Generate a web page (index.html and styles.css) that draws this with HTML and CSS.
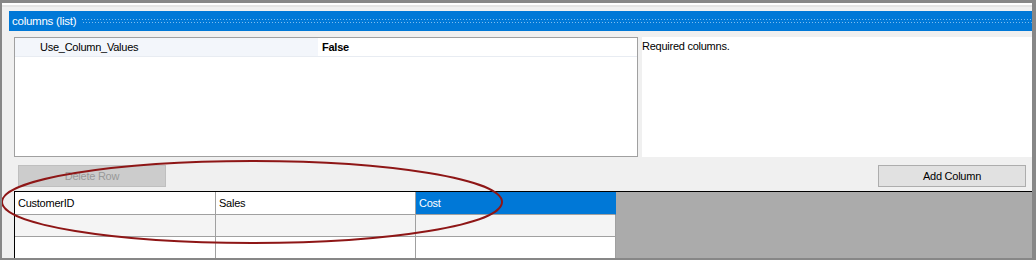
FILE: index.html
```html
<!DOCTYPE html>
<html>
<head>
<meta charset="utf-8">
<link rel="stylesheet" href="styles.css">
</head>
<body>
<div class="frame">
  <div class="topstrip"></div>
  <div class="section-head">
    <span class="title">columns (list)</span>
    <svg class="dots" height="6" preserveAspectRatio="none">
      <defs>
        <pattern id="dp" width="3" height="6" patternUnits="userSpaceOnUse">
          <rect x="0" y="0" width="1" height="1" fill="#7dbdf0"/>
          <rect x="1" y="3" width="1" height="1" fill="#7dbdf0"/>
        </pattern>
      </defs>
      <rect x="0" y="0" width="100%" height="6" fill="url(#dp)"/>
    </svg>
  </div>
  <div class="main">
    <div class="props">
      <div class="prop-row">
        <div class="prop-name">Use_Column_Values</div>
        <div class="prop-value">False</div>
      </div>
    </div>
    <div class="desc">Required columns.</div>
  </div>
  <div class="buttons">
    <button class="btn btn-disabled">Delete Row</button>
    <button class="btn">Add Column</button>
  </div>
  <div class="grid">
    <div class="table">
      <div class="cell head">CustomerID</div>
      <div class="cell head">Sales</div>
      <div class="cell head selected">Cost</div>
      <div class="cell alt"></div>
      <div class="cell alt"></div>
      <div class="cell alt"></div>
      <div class="cell"></div>
      <div class="cell"></div>
      <div class="cell"></div>
    </div>
    <div class="empty"></div>
  </div>
  <svg class="mark" width="1036" height="260" viewBox="0 0 1036 260">
    <ellipse cx="252" cy="202" rx="250" ry="41" fill="none" stroke="#8e1616" stroke-width="2"/>
  </svg>
</div>
</body>
</html>
```

FILE: styles.css
```css
html, body {
  margin: 0;
  padding: 0;
  background: #ffffff;
}

.frame {
  position: relative;
  width: 1036px;
  height: 260px;
  box-sizing: border-box;
  border-style: solid;
  border-color: #878787;
  border-width: 3px 4px 2px 2px;
  background: #f0f0f0;
  display: flex;
  flex-direction: column;
  overflow: hidden;
  font-family: "Liberation Sans", Tahoma, Arial, sans-serif;
  font-size: 11px;
  letter-spacing: -0.25px;
  color: #000;
}

.topstrip {
  height: 8px;
  flex: none;
  background: linear-gradient(#ffffff 0, #ffffff 2px, #e4e4e4 2px, #e4e4e4 4px, #f0f0f0 4px);
}

.section-head {
  flex: none;
  height: 20px;
  margin-left: 7px;
  background: #0078d7;
  display: flex;
  align-items: center;
}

.title {
  color: #ffffff;
  font-size: 11.5px;
  padding-left: 3px;
  white-space: nowrap;
}

.dots {
  flex: 1;
  margin-left: 6px;
  margin-top: 2px;
  height: 6px;
  display: block;
}

.main {
  flex: none;
  height: 120px;
  margin-top: 6px;
  padding-left: 12px;
  display: flex;
  gap: 4px;
}

.props {
  width: 624px;
  box-sizing: border-box;
  border: 1px solid #a0a0a0;
  background: #ffffff;
}

.prop-row {
  height: 18px;
  display: flex;
  border-bottom: 1px solid #e8ecf2;
  background: #f3f6fb;
}

.prop-name {
  width: 303px;
  box-sizing: border-box;
  padding-left: 25px;
  line-height: 18px;
  white-space: nowrap;
}

.prop-value {
  flex: 1;
  background: #ffffff;
  padding-left: 4px;
  font-weight: bold;
  line-height: 18px;
}

.desc {
  flex: 1;
  background: #ffffff;
  line-height: 16px;
  padding-top: 1px;
}

.buttons {
  flex: none;
  height: 34px;
  box-sizing: border-box;
  padding: 8px 6px 0 16px;
  display: flex;
  justify-content: space-between;
  align-items: flex-start;
}

.btn {
  width: 148px;
  height: 22px;
  box-sizing: border-box;
  margin: 0;
  padding: 0;
  font-family: inherit;
  font-size: 11px;
  letter-spacing: -0.25px;
  background: #e1e1e1;
  border: 1px solid #adadad;
  color: #000;
}

.btn-disabled {
  background: #cccccc;
  border-color: #bfbfbf;
  color: #999999;
}

.grid {
  flex: 1;
  margin-left: 12px;
  border-top: 1px solid #000;
  border-left: 1px solid #000;
  background: #ababab;
  display: flex;
  align-items: flex-start;
}

.table {
  display: grid;
  grid-template-columns: 201px 200px 200px;
  grid-template-rows: 23px 22px 22px;
}

.cell {
  box-sizing: border-box;
  border-right: 1px solid #a0a0a0;
  border-bottom: 1px solid #a0a0a0;
  background: #ffffff;
  padding-left: 3px;
  line-height: 22px;
  white-space: nowrap;
}

.cell.alt {
  background: #f4f4f4;
}

.cell.selected {
  background: #0078d7;
  color: #ffffff;
  border-right-color: #0078d7;
}

.empty {
  flex: 1;
}

.mark {
  position: absolute;
  left: -2px;
  top: -3px;
  pointer-events: none;
}
```
